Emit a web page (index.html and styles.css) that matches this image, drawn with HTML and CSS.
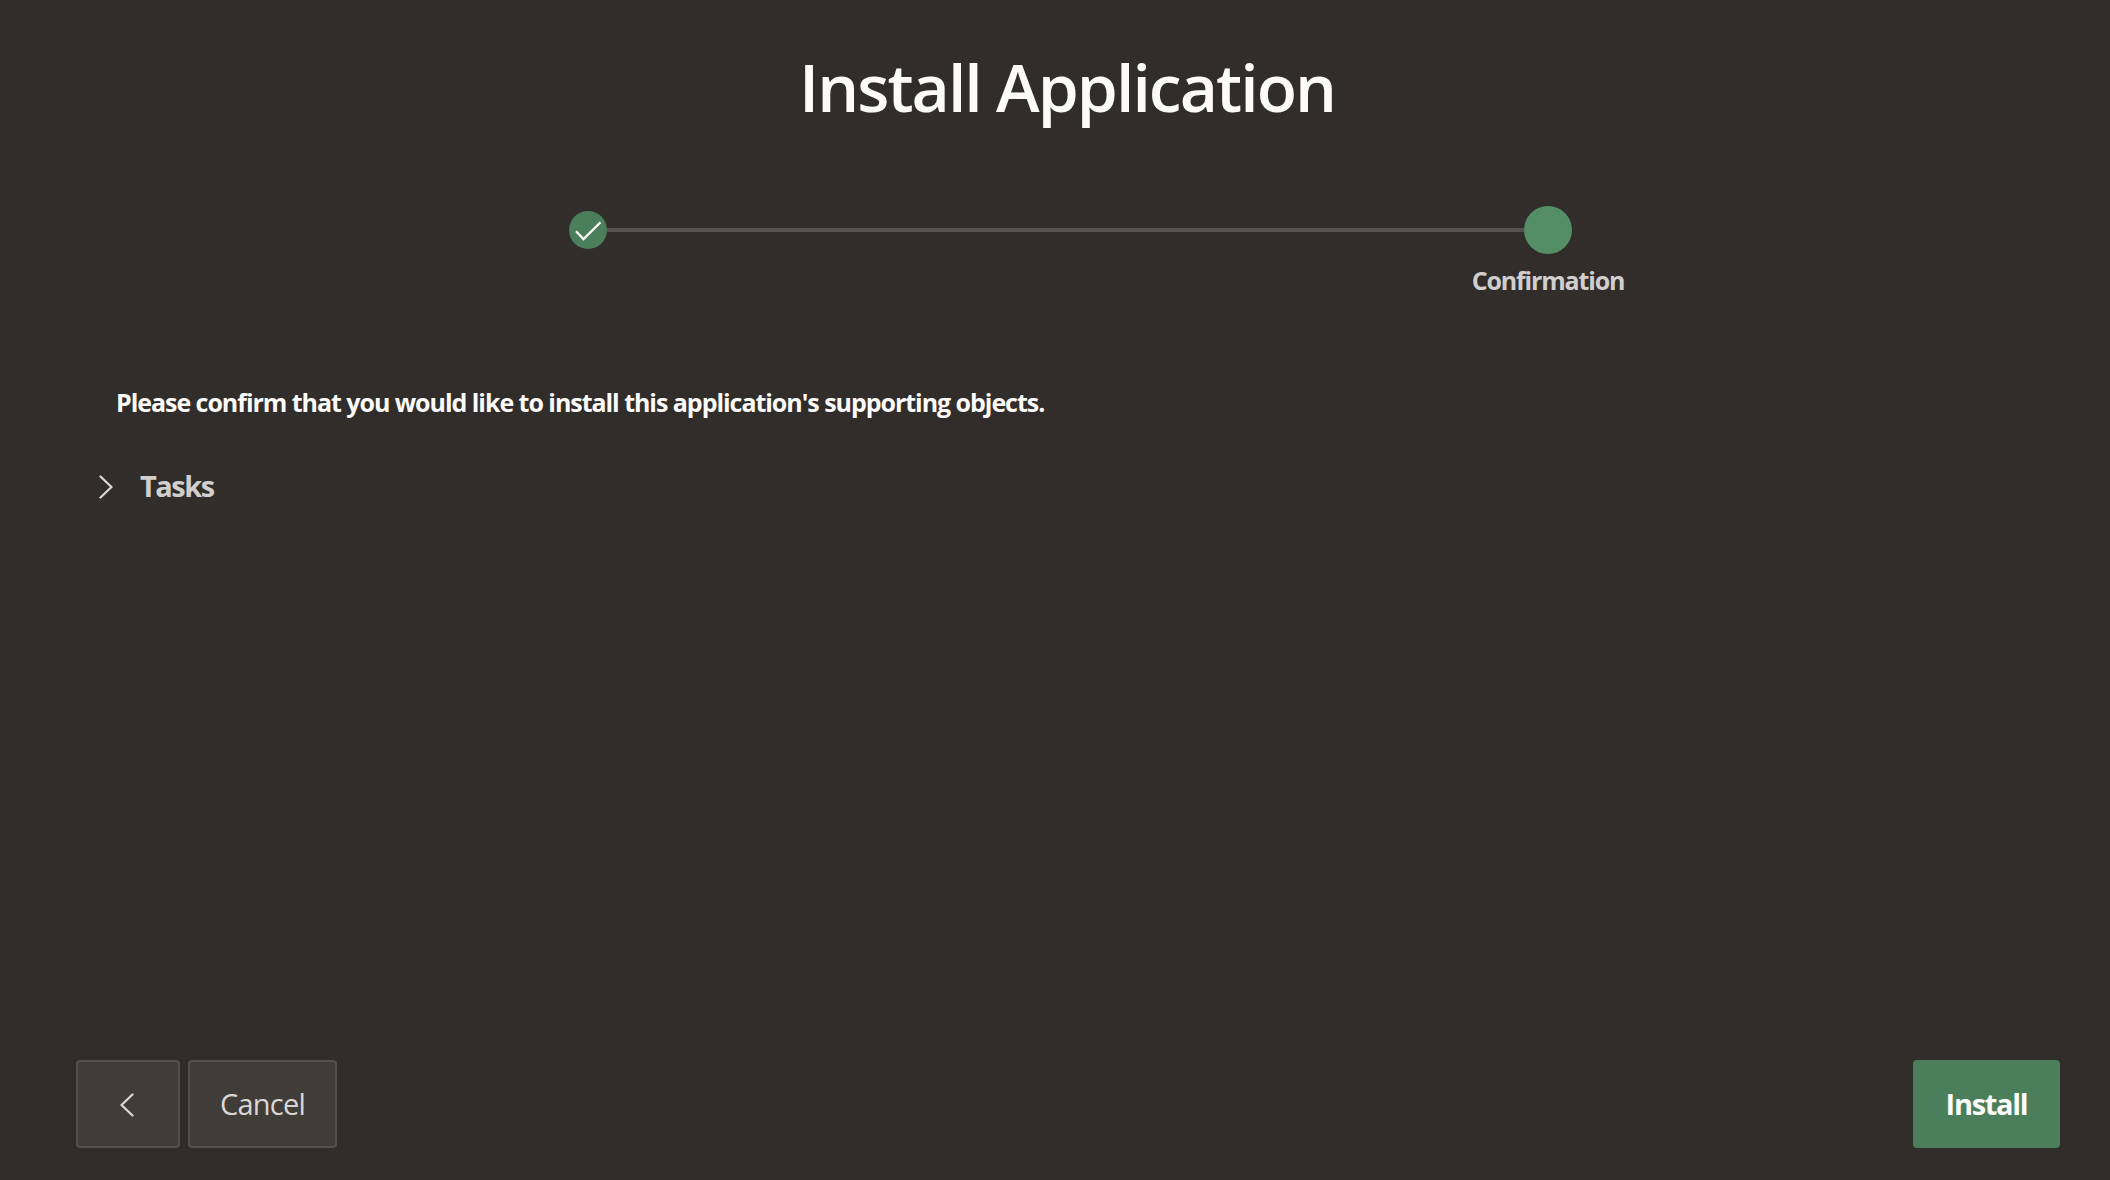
FILE: index.html
```html
<!DOCTYPE html>
<html lang="en">
<head>
<meta charset="utf-8">
<title>Install Application</title>
<link rel="stylesheet" href="styles.css">
</head>
<body>
<div class="wizard">
  <h1 class="title">Install Application</h1>
  <ol class="progress">
    <li class="step step-done">
      <svg class="check" viewBox="0 0 38 38" aria-label="Completed"><path d="M7 20.3 14.5 28 31.5 11.3"/></svg>
    </li>
    <li class="track"></li>
    <li class="step step-current"><span class="step-label">Confirmation</span></li>
  </ol>
  <main class="content">
    <p class="message">Please confirm that you would like to install this application's supporting objects.</p>
    <div class="tasks">
      <svg class="chevron" viewBox="0 0 14 24"><path d="M1.5 1.5 12.5 12 1.5 22.5"/></svg>
      <h2 class="tasks-title">Tasks</h2>
    </div>
  </main>
  <footer class="actions">
    <button class="button back" aria-label="Back"><svg class="chevron" viewBox="0 0 14 24"><path d="M12.5 1.5 1.5 12 12.5 22.5"/></svg></button>
    <button class="button cancel">Cancel</button>
    <button class="button install">Install</button>
  </footer>
</div>
</body>
</html>
```
FILE: styles.css
```css
* { box-sizing: border-box; }

body {
  margin: 0;
  background: #312d2a;
  color: #fcfbfa;
  font-family: "Open Sans", "Noto Sans", sans-serif;
}

.wizard {
  display: flex;
  flex-direction: column;
  height: 1180px;
  padding: 36px 50px 32px 76px;
}

.title {
  margin: 0;
  height: 100px;
  padding-right: 2px;
  font-size: 66px;
  line-height: 100px;
  font-weight: 600;
  letter-spacing: -1.95px;
  text-align: center;
  white-space: nowrap;
}

.progress {
  display: flex;
  align-items: center;
  list-style: none;
  width: 1003px;
  height: 48px;
  margin: 70px 0 0 493px;
  padding: 0;
}

.step { border-radius: 50%; flex: none; }
.step-done { width: 38px; height: 38px; background: #4b7f5b; }
.step-current {
  display: flex;
  flex-direction: column;
  align-items: center;
  width: 48px;
  height: 48px;
  background: #548e66;
}
.track { flex: 1; height: 4px; background: #56524d; }

.check { display: block; width: 38px; height: 38px; }
.check path, .chevron path { fill: none; stroke: #fcfbfa; stroke-width: 2.3; }

.step-label {
  margin-top: 58px;
  color: #d1cfcd;
  font-size: 25px;
  line-height: 32px;
  font-weight: 700;
  letter-spacing: -1.15px;
}

.content { flex: 1; padding-top: 132px; }

.message {
  margin: 0 0 0 40px;
  font-size: 25px;
  line-height: 32px;
  font-weight: 700;
  letter-spacing: -1.04px;
  white-space: nowrap;
}

.tasks {
  display: flex;
  align-items: center;
  gap: 28px;
  height: 40px;
  margin: 48px 0 0 22px;
}
.tasks .chevron { margin: 2px -1px 0 1px; }
.tasks-title {
  margin: 0;
  color: #d1cfcd;
  font-size: 29px;
  line-height: 40px;
  font-weight: 700;
  letter-spacing: -1.5px;
}
.chevron { display: block; width: 14px; height: 24px; }
.chevron path { stroke: #d9d7d5; stroke-linecap: round; stroke-linejoin: round; }

.actions { display: flex; gap: 8px; }
.button {
  display: flex;
  align-items: center;
  justify-content: center;
  height: 88px;
  padding: 0 0 2px;
  border: 2px solid #54504b;
  border-radius: 4px;
  background: #403c38;
  color: #d9d7d5;
  font-family: inherit;
  font-size: 29px;
}
.back { width: 104px; padding: 2px 2px 0 0; }
.cancel { width: 149px; letter-spacing: -0.8px; }
.install {
  width: 147px;
  margin-left: auto;
  border-color: #4b7f5b;
  background: #4b7f5b;
  color: #fcfbfa;
  font-weight: 700;
  letter-spacing: -1.3px;
}
```
